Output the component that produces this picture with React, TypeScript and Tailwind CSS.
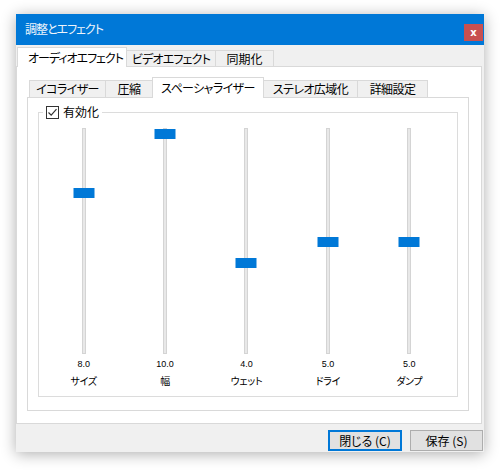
import React from "react";

const font = "font-['Noto_Sans_CJK_JP','Noto_Sans',sans-serif] [font-feature-settings:'palt']";

// slider data: top = offset of the thumb from the top of the track
const sliders = [
  { value: "8.0", label: "サイズ", top: 59 },
  { value: "10.0", label: "幅", top: 0 },
  { value: "4.0", label: "ウェット", top: 129 },
  { value: "5.0", label: "ドライ", top: 108 },
  { value: "5.0", label: "ダンプ", top: 108 },
];

const innerTabs = [
  { name: "イコライザー", w: "w-[77px]" },
  { name: "圧縮", w: "w-[48px]" },
  { name: "スペーシャライザー", w: "w-[112px]", active: true },
  { name: "ステレオ広域化", w: "w-[95px]" },
  { name: "詳細設定", w: "w-[71px]" },
];

function Slider({ value, label, top }: { value: string; label: string; top: number }) {
  return (
    <div className="flex flex-col items-center">
      <div className="relative mt-[8px] h-[226px] w-[4px] border border-[#d4d4d4] bg-[#e8e8e8]">
        <div
          className="absolute left-1/2 h-[10px] w-[21px] -translate-x-1/2 bg-[#0078d7]"
          style={{ top }}
        />
      </div>
      <div className="mt-[4px] h-[12px] font-['Liberation_Sans',sans-serif] text-[9px] leading-[12px] text-black">
        {value}
      </div>
      <div className="mt-[5px] h-[12px] text-[10px] leading-[12px] tracking-[-0.3px] text-black">{label}</div>
    </div>
  );
}

export default function App() {
  return (
    <div className={`h-[470px] w-[500px] overflow-hidden bg-white pl-[16px] pt-[14px] ${font}`}>
      {/* window */}
      <div className="flex h-[438px] w-[468px] flex-col bg-[#f0f0f0] shadow-[0_2px_14px_rgba(0,0,0,0.32)]">
        {/* title bar */}
        <div className="flex h-[31px] bg-[#0078d7]">
          <span className="ml-[9px] mt-[8px] whitespace-nowrap text-[12px] leading-[14px] tracking-[-1px] text-[#eef4fb]">
            調整とエフェクト
          </span>
          <button className="ml-auto mr-px mt-[10px] flex h-[17px] w-[19px] items-center justify-center bg-[#c75050] font-['DejaVu_Sans',sans-serif] text-[10px] font-bold leading-none text-white">
            x
          </button>
        </div>

        {/* outer tabs */}
        <div className="flex h-[21px] items-end whitespace-nowrap pl-px text-[12px] leading-[14px] text-black">
          <div className="relative z-10 -mb-px flex h-[20px] w-[110px] items-center border-x border-t border-[#d9d9d9] bg-white pl-[10px] tracking-[-1px]">
            オーディオエフェクト
          </div>
          <div className="-ml-px flex h-[16px] w-[90px] items-center justify-center border-x border-t border-[#d9d9d9] bg-[#f0f0f0] tracking-[-0.8px]">
            ビデオエフェクト
          </div>
          <div className="-ml-px flex h-[16px] w-[59px] items-center justify-center border-x border-t border-[#d9d9d9] bg-[#f0f0f0]">
            同期化
          </div>
        </div>

        {/* outer panel */}
        <div className="mr-[2px] h-[358px] border border-[#d9d9d9] bg-white pl-[10px] pt-[10px]">
          {/* inner tabs */}
          <div className="flex h-[20px] items-end whitespace-nowrap pl-[2px] text-[12px] leading-[14px] tracking-[-0.6px] text-black">
            {innerTabs.map((t, i) =>
              t.active ? (
                <div
                  key={t.name}
                  className={`relative z-10 -mb-px -ml-px flex h-[21px] items-center justify-center border-x border-t border-[#d9d9d9] bg-white ${t.w}`}
                >
                  {t.name}
                </div>
              ) : (
                <div
                  key={t.name}
                  className={`flex h-[17px] items-center justify-center border-x border-t border-[#d9d9d9] bg-[#f0f0f0] ${t.w} ${i > 0 ? "-ml-px" : ""}`}
                >
                  {t.name}
                </div>
              )
            )}
          </div>

          {/* inner panel */}
          <div className="h-[314px] w-[442px] border border-[#d9d9d9] bg-white pl-[10px] pt-[6px]">
            <fieldset className="h-[293px] w-[420px] border border-[#dcdcdc] pl-[4px]">
              <legend className="flex h-[16px] items-center px-[3px] text-[12px] leading-[14px] text-black">
                <span className="flex h-[13px] w-[13px] items-center justify-center border border-[#333] bg-white">
                  <svg width="11" height="11" viewBox="0 0 11 11">
                    <path d="M1.5 5.5 L4.2 8.2 L9.5 2.2" fill="none" stroke="#333" strokeWidth="1.2" />
                  </svg>
                </span>
                <span className="ml-[4px]">有効化</span>
              </legend>
              <div className="grid w-[407px] grid-cols-5">
                {sliders.map((s) => (
                  <Slider key={s.label} {...s} />
                ))}
              </div>
            </fieldset>
          </div>
        </div>

        {/* footer */}
        <div className="flex flex-1 justify-end gap-[8px] pr-px pt-[6px] text-[12px] leading-[14px] text-black">
          <button className="h-[21px] w-[74px] border-2 border-[#0078d7] bg-[#e1e1e1]">閉じる (C)</button>
          <button className="h-[21px] w-[73px] border border-[#adadad] bg-[#e1e1e1]">保存 (S)</button>
        </div>
      </div>
    </div>
  );
}
